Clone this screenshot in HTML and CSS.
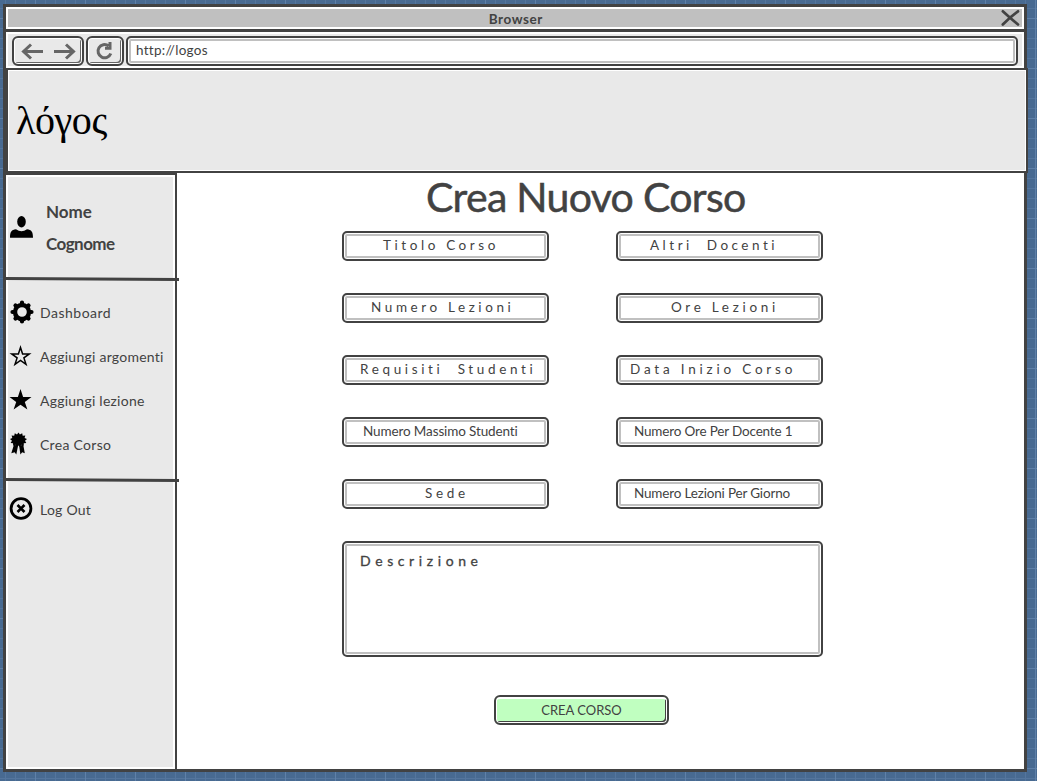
FILE: index.html
```html
<!DOCTYPE html>
<html lang="it">
<head>
<meta charset="utf-8">
<title>Crea Nuovo Corso</title>
<link rel="stylesheet" href="styles.css">
</head>
<body>
<div class="browser">
  <div class="titlebar">
    <span class="titlebar-text">Browser</span>
    <svg class="close" width="20" height="18" viewBox="0 0 20 18"><path d="M2.800 2.300Q10 9 18 15.500M18 2.300Q10 8 2.800 15.500" fill="none" stroke="#424242" stroke-width="2.700" stroke-linecap="round"/></svg>
  </div>
  <div class="toolbar">
    <div class="tool nav">
      <svg width="68" height="26" viewBox="0 0 68 26" fill="none" stroke="#666" stroke-width="3"><path d="M29 13.500H9.500M17 6.500L9.500 13.500L17 20.500M40 13.500H59M52 6.500L59.500 13.500L52 20.500"/></svg>
    </div>
    <div class="tool reload">
      <svg width="34" height="26" viewBox="0 0 34 26" fill="none" stroke="#666" stroke-width="3"><path d="M22.800 15.500A6.600 6.600 0 1 1 20.500 7.800M22 4V11M23.500 10.200H17"/></svg>
    </div>
    <div class="box address"><span class="address-text">http://logos</span></div>
  </div>
  <header class="header"><span class="logo">λόγος</span></header>
  <div class="content">
    <nav class="sidebar">
      <div class="user">
        <svg class="icon" width="23" height="22" viewBox="0 0 23 22"><ellipse cx="11.500" cy="5.800" rx="4.300" ry="5.700"/><path d="M0 21.700C0 16 1.500 13.700 6 13.300Q11.500 17 17 13.300C21.500 13.700 23 16 23 21.700Z"/></svg>
        <div class="user-name"><span class="first-name">Nome</span><span class="last-name">Cognome</span></div>
      </div>
      <svg class="divider" width="173" height="5" viewBox="0 0 173 5"><path d="M0 1.500L173 2.400" stroke="#424242" stroke-width="3"/></svg>
      <ul class="menu">
        <li class="item dashboard">
          <svg class="icon" width="24" height="24" viewBox="-12 -12 24 24"><circle r="7" fill="none" stroke="#000" stroke-width="4.400"/><g stroke="#000" stroke-width="4.200" stroke-linecap="round"><path d="M0-8.500V-9.500M0 8.500V9.500M-8.500 0H-9.500M8.500 0H9.500"/><path d="M-6-6L-6.500-6.500M6-6L6.500-6.500M-6 6L-6.500 6.500M6 6L6.500 6.500"/></g></svg>
          <span>Dashboard</span>
        </li>
        <li class="item argomenti">
          <svg class="icon" width="24" height="24" viewBox="0 0 24 24"><path d="M10.500 3.500L12.600 9.900L19.300 9.900L13.900 13.900L16 20.300L10.500 16.400L5 20.300L7.100 13.900L1.700 9.900L8.400 9.900Z" fill="none" stroke="#000" stroke-width="1.500"/></svg>
          <span>Aggiungi argomenti</span>
        </li>
        <li class="item lezione">
          <svg class="icon" width="24" height="24" viewBox="0 0 24 24"><path d="M10.500 1L13.100 9H21.500L14.800 14L17.400 21.500L10.500 16.800L3.600 21.500L6.200 14L-.5 9H7.900Z"/></svg>
          <span>Aggiungi lezione</span>
        </li>
        <li class="item corso">
          <svg class="icon" width="24" height="24" viewBox="0 0 24 24"><path d="M8.500 .5L9.900 2.500L12.200 1.200L12.700 3.700L15.300 3.500L14.600 6L17 7L15 8.700L16.300 11L13.800 11.200L13.700 13.700L11.400 12.800L10 15L8.500 13.500L6.600 15L5.500 12.800L3.200 13.700L3 11.200L.6 11L2 8.700L0 7L2.300 6L1.600 3.500L4.200 3.700L4.800 1.200L7 2.500Z"/><path d="M4 12.500L8 14L6.300 22.500L4.600 20.300L1.300 21.300ZM13.200 12.500L9.200 14L10.400 22.500L12.200 20.300L14.800 21.300Z"/></svg>
          <span>Crea Corso</span>
        </li>
      </ul>
      <svg class="divider" width="173" height="5" viewBox="0 0 173 5"><path d="M0 1.500L173 2.400" stroke="#424242" stroke-width="3"/></svg>
      <div class="item logout">
        <svg class="icon" width="24" height="24" viewBox="0 0 24 24"><circle cx="11" cy="11.500" r="9.900" fill="none" stroke="#000" stroke-width="2.800"/><path d="M7.500 8L14.500 15M14.500 8L7.500 15" stroke="#000" stroke-width="2.600"/></svg>
        <span>Log Out</span>
      </div>
    </nav>
    <main class="main">
      <h1 class="title">Crea Nuovo Corso</h1>
      <div class="fields">
        <div class="box field titolo">Titolo Corso</div>
        <div class="box field docenti">Altri  Docenti</div>
        <div class="box field numero">Numero Lezioni</div>
        <div class="box field ore">Ore Lezioni</div>
        <div class="box field requisiti">Requisiti  Studenti</div>
        <div class="box field data">Data Inizio Corso</div>
        <div class="box field massimo">Numero Massimo Studenti</div>
        <div class="box field ore-docente">Numero Ore Per Docente 1</div>
        <div class="box field sede">Sede</div>
        <div class="box field giorno">Numero Lezioni Per Giorno</div>
        <div class="box description">Descrizione</div>
      </div>
      <div class="submit"><span class="submit-text">CREA CORSO</span></div>
    </main>
  </div>
</div>
</body>
</html>
```
FILE: styles.css
```css
* { box-sizing: border-box; }
body {
  margin: 0;
  height: 781px;
  padding: 4px 0 0 3px;
  overflow: hidden;
  color: #424242;
  font-family: Lato, sans-serif;
  background-color: #486a91;
  background-image:
    linear-gradient(90deg, #5f80a8 1px, transparent 1px),
    linear-gradient(#5f80a8 1px, transparent 1px),
    linear-gradient(90deg, #54759d 1px, transparent 1px),
    linear-gradient(#54759d 1px, transparent 1px);
  background-size: 50px 50px, 50px 50px, 10px 10px, 10px 10px;
  background-position: 35px 0, 0 18px, 5px 0, 0 8px;
}
.browser {
  display: flex;
  flex-direction: column;
  width: 1024px;
  height: 768px;
  border: 3px solid #424242;
  background: #fff;
}
.titlebar {
  display: flex;
  align-items: center;
  justify-content: flex-end;
  height: 22px;
  border: 2px solid #fff;
  background: #c0c0c0;
}
.titlebar-text {
  margin-right: 457px;
  padding-top: 2px;
  font-size: 13.5px;
  font-weight: 700;
  letter-spacing: .6px;
  line-height: 18px;
}
.close { margin-right: 2px; }
.toolbar {
  display: flex;
  gap: 2px;
  height: 39px;
  padding: 4px 6px 0;
  border-top: 3px solid #424242;
  background: #e9e9e9;
  box-shadow: inset 0 0 0 2px #fff;
}
.tool {
  height: 30px;
  border: 2px solid #424242;
  border-radius: 6px;
  background: #e9e9e9;
  box-shadow: inset 0 0 0 1px #fff, inset -2px -2px #666;
}
.nav { width: 72px; }
.reload { width: 38px; }
.tool svg { display: block; }
.box {
  border: 2px solid #424242;
  border-radius: 5px;
  background: #fff;
  box-shadow: inset 0 0 0 1px #fff, inset 0 0 0 3px #c0c0c0;
}
.address { width: 892px; height: 30px; padding-left: 8px; }
.address-text { font-size: 13.5px; letter-spacing: .28px; line-height: 25px; }
.header {
  display: flex;
  align-items: center;
  width: 1022px;
  height: 105px;
  padding-left: 8px;
  border: 2px solid #424242;
  background: #e9e9e9;
  box-shadow: inset 0 0 0 1px #fff;
}
.logo {
  color: #000;
  font-family: "Liberation Serif", serif;
  font-size: 40px;
  letter-spacing: -.4px;
  line-height: 48px;
}
.content { display: flex; height: 597px; margin-top: -1px; }
.sidebar {
  display: flex;
  flex-direction: column;
  width: 171px;
  border: solid #424242;
  border-width: 3px 2px 0 0;
  background: #e9e9e9;
  box-shadow: inset 0 0 0 2px #fff;
}
.user { display: flex; height: 102px; padding: 21px 0 0 4px; }
.user .icon { margin-top: 20px; }
.user-name {
  display: flex;
  flex-direction: column;
  margin-left: 13px;
  font-size: 17px;
  font-weight: 700;
  line-height: 32px;
}
.last-name { letter-spacing: -.55px; }
.icon { flex: none; overflow: visible; }
.divider { flex: none; display: block; overflow: visible; }
.menu { height: 196px; margin: 0; padding: 8px 0 0; list-style: none; }
.item {
  display: flex;
  align-items: center;
  gap: 6px;
  height: 44px;
  padding-left: 4px;
  font-size: 14px;
}
.item .icon { margin-left: -.5px; margin-right: .5px; }
.item span { white-space: nowrap; }
.dashboard { letter-spacing: .5px; }
.argomenti, .logout { letter-spacing: .25px; }
.lezione { letter-spacing: .24px; }
.corso { letter-spacing: .3px; }
.logout { margin-top: 4px; }
.main { display: flex; flex-direction: column; align-items: flex-start; flex: 1; padding-left: 165px; }
.title {
  margin: 0 0 0 84px;
  height: 59px;
  font-size: 41px;
  font-weight: 400;
  letter-spacing: -.7px;
  line-height: 50px;
  -webkit-text-stroke: .5px #424242;
}
.fields { display: grid; grid-template-columns: 207px 207px; gap: 32px 67px; }
.field {
  height: 30px;
  font-size: 13.5px;
  letter-spacing: 3.7px;
  line-height: 25px;
  white-space: pre;
}
.titolo { padding-left: 39px; letter-spacing: 3.6px; }
.docenti { padding-left: 32px; letter-spacing: 3.5px; }
.numero { padding-left: 27px; letter-spacing: 3.6px; }
.ore { padding-left: 53px; }
.requisiti { padding-left: 16px; letter-spacing: 3.65px; }
.data { padding-left: 12px; letter-spacing: 3.8px; }
.massimo { padding-left: 19px; letter-spacing: -.12px; }
.ore-docente { padding-left: 16px; letter-spacing: -.17px; }
.sede { padding-left: 81px; }
.giorno { padding-left: 16px; letter-spacing: -.17px; }
.description {
  grid-column: 1 / 3;
  height: 116px;
  padding: 5px 0 0 16px;
  font-size: 14px;
  letter-spacing: 4.6px;
  line-height: 25px;
  -webkit-text-stroke: .3px #424242;
}
.submit {
  width: 175px;
  height: 30px;
  margin: 38px 0 0 152px;
  border: 2px solid #424242;
  border-radius: 6px;
  background: #c0ffc0;
  box-shadow: inset 0 0 0 1px #fff, inset 0 2px #fff, inset -2px -2px #424242;
  text-align: center;
}
.submit-text { font-size: 13px; line-height: 26px; }
```
